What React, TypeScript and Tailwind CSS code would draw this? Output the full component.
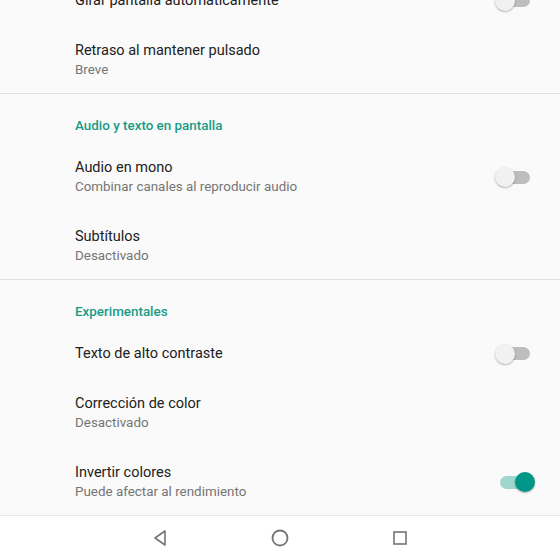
import React from "react";

function Toggle({ on }: { on?: boolean }) {
  return (
    <div className="relative w-[40px] h-[20px] flex items-center">
      <div
        className={
          "absolute left-[5px] right-[5px] h-[13px] rounded-full " +
          (on ? "bg-[#9fd6cd]" : "bg-[#bdbdbd]")
        }
      />
      <div
        className={
          "absolute top-0 w-[20px] h-[20px] rounded-full shadow-[0_1px_2px_rgba(0,0,0,0.3)] " +
          (on ? "right-0 bg-[#009688]" : "left-0 bg-[#f1f1f1]")
        }
      />
    </div>
  );
}

function Row({
  title,
  sub,
  toggle,
  on,
}: {
  title: string;
  sub?: string;
  toggle?: boolean;
  on?: boolean;
}) {
  return (
    <div
      className={
        "flex items-center pl-[75px] pr-[25px] pt-[3px] " + (sub ? "h-[69px]" : "h-[50px]")
      }
    >
      <div className="flex-1 flex flex-col">
        <div className="text-[14.5px] leading-[19px] text-[#212121]">{title}</div>
        {sub && <div className="text-[13.4px] leading-[19px] text-[#757575]">{sub}</div>}
      </div>
      {toggle && <Toggle on={on} />}
    </div>
  );
}

function Header({ text }: { text: string }) {
  return (
    <div className="h-[47px] pl-[75px] pt-[24px]">
      <div className="text-[13.4px] leading-[16px] font-medium text-[#1a9a85]">{text}</div>
    </div>
  );
}

export default function App() {
  return (
    <div
      className="w-[560px] h-[560px] overflow-hidden bg-[#fafafa] flex flex-col"
      style={{ fontFamily: "Roboto, 'Noto Sans', sans-serif" }}
    >
      <div className="flex-1 overflow-hidden">
        <div className="mt-[-26px] flex flex-col">
          <Row title="Girar pantalla automáticamente" toggle />
          <Row title="Retraso al mantener pulsado" sub="Breve" />
          <div className="h-px bg-[#e0e0e0]" />
          <Header text="Audio y texto en pantalla" />
          <Row title="Audio en mono" sub="Combinar canales al reproducir audio" toggle />
          <Row title="Subtítulos" sub="Desactivado" />
          <div className="h-px bg-[#e0e0e0]" />
          <Header text="Experimentales" />
          <Row title="Texto de alto contraste" toggle />
          <Row title="Corrección de color" sub="Desactivado" />
          <Row title="Invertir colores" sub="Puede afectar al rendimiento" toggle on />
        </div>
      </div>
      <div className="h-[45px] shrink-0 border-t border-[#e6e6e6] bg-white flex items-center">
        <div className="w-[260px] flex items-center justify-between ml-[150px]">
          <svg width="20" height="20" viewBox="0 0 20 20">
            <path d="M15 3 L5 10 L15 17 Z" fill="none" stroke="#757575" strokeWidth="1.6" strokeLinejoin="round" />
          </svg>
          <svg width="20" height="20" viewBox="0 0 20 20">
            <circle cx="10" cy="10" r="7.5" fill="none" stroke="#757575" strokeWidth="1.8" />
          </svg>
          <svg width="20" height="20" viewBox="0 0 20 20">
            <rect x="4" y="4" width="12" height="12" fill="none" stroke="#757575" strokeWidth="1.6" />
          </svg>
        </div>
      </div>
    </div>
  );
}
